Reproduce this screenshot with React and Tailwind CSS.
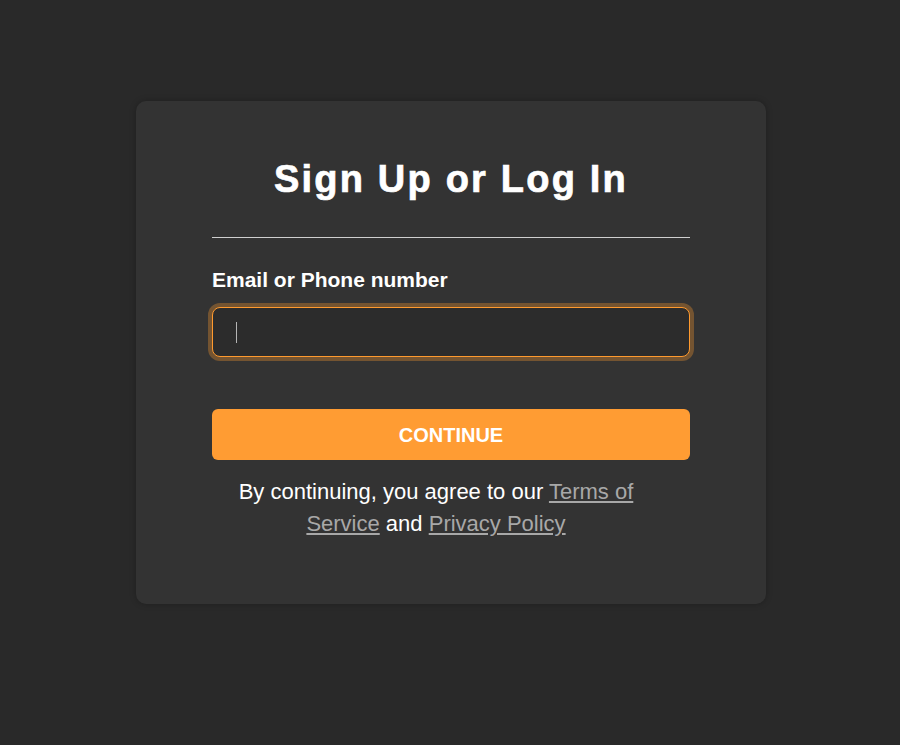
export default function App() {
  return (
    <div className="min-h-[745px] bg-[#292929] pl-[2px] pt-[101px] font-['Liberation_Sans',Arial,sans-serif]">
      <div className="mx-auto w-[630px] h-[503px] rounded-[10px] bg-[#333333] px-[76px] pt-[56px] shadow-[0_0_6px_rgba(0,0,0,0.25)]">
        <h1 className="text-center text-[38px] leading-[44px] font-bold tracking-[2.2px] text-white [-webkit-text-stroke:0.7px_white]">
          Sign Up or Log In
        </h1>
        <div className="mt-[36px] h-px bg-[#cfcfcf]" />
        <form onSubmit={(e) => e.preventDefault()}>
          <label className="mt-[30px] block text-[21px] leading-[24px] font-bold text-white">
            Email or Phone number
          </label>
          <div className="relative mt-[15px]">
            <input
              type="text"
              className="block h-[50px] w-full rounded-[8px] border border-[#ff9a2e] bg-[#2c2c2c] px-[23px] text-[18px] text-white caret-transparent outline-none shadow-[0_0_0_4px_rgba(255,154,46,0.32)]"
            />
            <span className="absolute left-[24px] top-[15px] h-[21px] w-px bg-[#b5b5b5]" />
          </div>
          <button
            type="submit"
            className="mt-[52px] block h-[51px] w-full rounded-[6px] bg-[#ff9c33] text-[20px] font-bold text-white"
          >
            CONTINUE
          </button>
        </form>
        <p className="mt-[16px] w-[448px] text-center text-[22px] leading-[32px] text-white">
          By continuing, you agree to our{" "}
          <a href="#" className="text-[#a8a8a8] underline">Terms of Service</a>{" "}
          and{" "}
          <a href="#" className="text-[#a8a8a8] underline">Privacy Policy</a>
        </p>
      </div>
    </div>
  );
}
